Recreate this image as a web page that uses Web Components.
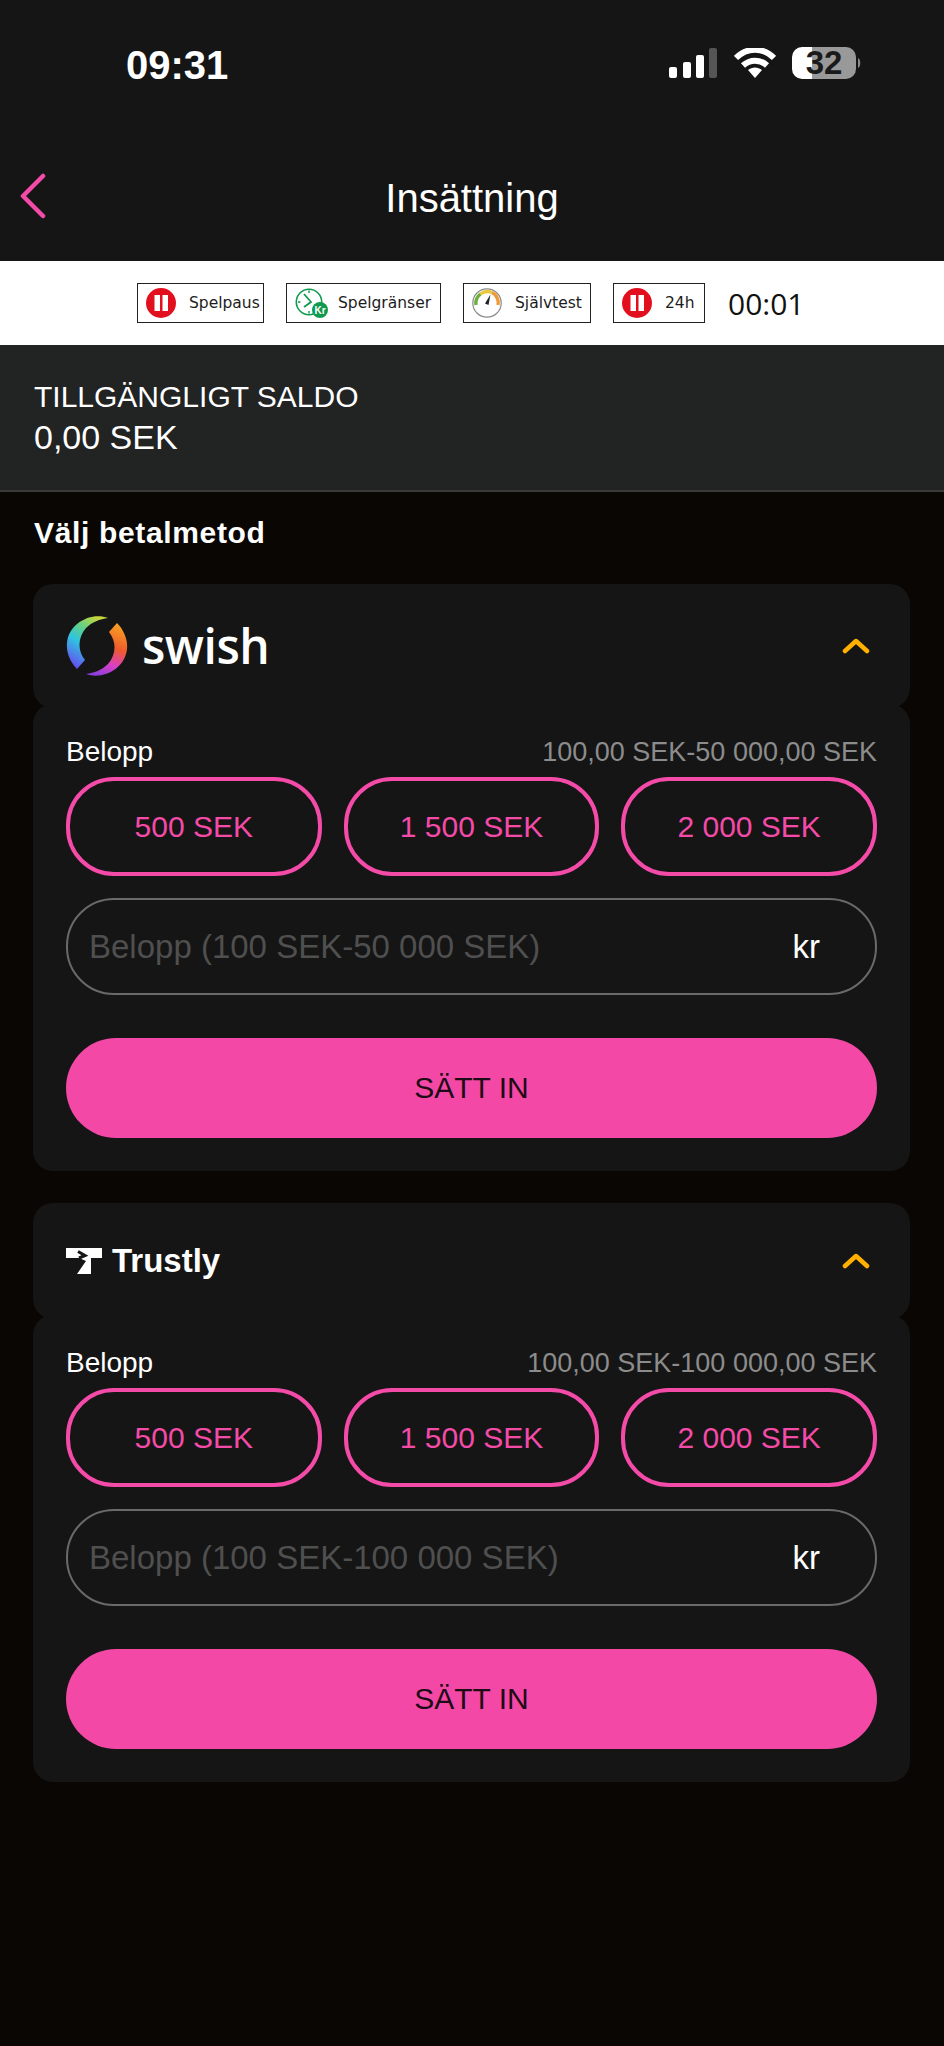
<!DOCTYPE html>
<html lang="sv">
<head>
<meta charset="utf-8">
<title>Insättning</title>
<style>
  html, body { margin: 0; padding: 0; background: #0a0603; }
  body { width: 944px; height: 2046px; overflow: hidden; font-family: "Liberation Sans", Arial, sans-serif; color: #fff; }
</style>
</head>
<body>
<app-header></app-header>
<rg-bar>
  <rg-chip type="pause" width="127">Spelpaus</rg-chip>
  <rg-chip type="clock" width="155">Spelgränser</rg-chip>
  <rg-chip type="gauge" width="128">Självtest</rg-chip>
  <rg-chip type="pause" width="92">24h</rg-chip>
</rg-bar>
<balance-panel></balance-panel>
<deposit-page>
  <pay-method range="100,00 SEK-50 000,00 SEK" placeholder="Belopp (100 SEK-50 000 SEK)" head="124">
    <swish-logo slot="logo"></swish-logo>
  </pay-method>
  <pay-method range="100,00 SEK-100 000,00 SEK" placeholder="Belopp (100 SEK-100 000 SEK)" head="116">
    <trustly-logo slot="logo"></trustly-logo>
  </pay-method>
</deposit-page>

<script>
// status bar and the title row with the back arrow
class AppHeader extends HTMLElement {
  constructor() {
    super();
    this.attachShadow({ mode: 'open' });
    this.shadowRoot.innerHTML = `
      <style>
        :host { display: block; height: 261px; background: #151515; color: #fff; }
        .status { height: 130px; box-sizing: border-box; padding: 45px 82px 0 126px; display: flex; justify-content: space-between; align-items: flex-start; }
        .time { font-size: 40px; line-height: 40px; font-weight: 700; -webkit-text-stroke: 0; }
        .icons { display: flex; align-items: flex-start; }
        .nav { height: 131px; display: flex; align-items: flex-start; position: relative; }
        .back { margin: 43px 0 0 20px; width: 26px; height: 46px; }
        h1 { position: absolute; left: 0; right: 0; top: 44px; margin: 0; text-align: center; font-size: 40px; line-height: 48px; font-weight: 400; }
        .batt { position: relative; width: 70px; height: 32px; margin-left: 16px; margin-top: 2px; }
        .batt span { position: absolute; left: 0; width: 64px; top: 0; text-align: center; font-size: 33px; line-height: 32px; font-weight: 700; color: #1a1a1a; }
      </style>
      <div class="status">
        <span class="time">09:31</span>
        <div class="icons">
          <svg width="48" height="30" viewBox="0 0 48 30" style="margin-top:3px">
            <rect x="0" y="19" width="8" height="11" rx="2" fill="#fff"/>
            <rect x="14" y="14" width="8" height="16" rx="2" fill="#fff"/>
            <rect x="27" y="7" width="8" height="23" rx="2" fill="#fff"/>
            <rect x="40" y="0" width="8" height="30" rx="2" fill="#555"/>
          </svg>
          <svg width="42" height="30" viewBox="0 0 42 30" style="margin:3px 0 0 17px">
            <path d="M2 10 C13 -1 29 -1 40 10" fill="none" stroke="#fff" stroke-width="6" stroke-linecap="butt"/>
            <path d="M9 17.5 C16 11 26 11 33 17.5" fill="none" stroke="#fff" stroke-width="6"/>
            <path d="M14 22 C18 18.5 24 18.5 28 22 L21 30Z" fill="#fff"/>
          </svg>
          <div class="batt">
            <svg width="70" height="32" viewBox="0 0 70 32" style="position:absolute;left:0;top:0">
              <defs><clipPath id="b"><rect width="64" height="32" rx="10"/></clipPath></defs>
              <g clip-path="url(#b)">
                <rect width="20" height="32" fill="#fff"/>
                <rect x="20" width="44" height="32" fill="#999"/>
              </g>
              <path d="M66 11 C69 12 69 20 66 21Z" fill="#888"/>
            </svg>
            <span>32</span>
          </div>
        </div>
      </div>
      <div class="nav">
        <svg class="back" viewBox="0 0 26 46">
          <path d="M23 3 L3 23 L23 43" transform="translate(0 0)" fill="none" stroke="#f44aa8" stroke-width="4.5" stroke-linecap="round" stroke-linejoin="round"/>
        </svg>
        <h1>Insättning</h1>
      </div>`;
  }
}

// white strip with the responsible gaming buttons and the session timer
class RgBar extends HTMLElement {
  constructor() {
    super();
    this.attachShadow({ mode: 'open' });
    this.shadowRoot.innerHTML = `
      <style>
        :host { display: flex; align-items: center; height: 84px; box-sizing: border-box; padding: 0 0 0 137px; background: #fff; gap: 22px; }
        .timer { font-family: "Open Sans", sans-serif; font-size: 30px; color: #111; margin-left: 1px; }
      </style>
      <slot></slot>
      <span class="timer">00:01</span>`;
  }
}

const chipIcons = {
  pause: `<circle cx="15" cy="15" r="15" fill="#e20f1f"/><rect x="8.5" y="7" width="5.5" height="16" fill="#fff"/><rect x="16.5" y="7" width="5.5" height="16" fill="#fff"/>`,
  clock: `<circle cx="14" cy="14" r="12.7" fill="#fff" stroke="#109a50" stroke-width="1.6"/>
    <path d="M9 6 L16 14 L9 19" fill="none" stroke="#109a50" stroke-width="1.8"/>
    <path d="M14 2.5V5M3 14H5.5M14 23V25.5" stroke="#109a50" stroke-width="1.4"/>
    <circle cx="25" cy="22" r="8" fill="#109a50"/>
    <text x="25" y="25.5" text-anchor="middle" font-family="Liberation Sans" font-weight="700" font-size="10" fill="#fff">Kr</text>`,
  gauge: `<circle cx="15" cy="15" r="14.2" fill="#fff" stroke="#8a8a8a" stroke-width="1.2"/>
    <path d="M4 17 A11.5 11.5 0 0 1 8.5 6" fill="none" stroke="#6fae3d" stroke-width="3.4"/>
    <path d="M8.5 6 A11.5 11.5 0 0 1 20 4.5" fill="none" stroke="#e8c93a" stroke-width="3.4"/>
    <path d="M20 4.5 A11.5 11.5 0 0 1 26 17" fill="none" stroke="#ef9a35" stroke-width="3.4"/>
    <path d="M18.5 6.5 L16.5 17 L13 15.5Z" fill="#222"/>`
};

class RgChip extends HTMLElement {
  constructor() {
    super();
    this.attachShadow({ mode: 'open' });
  }
  connectedCallback() {
    const icon = chipIcons[this.getAttribute('type')];
    this.shadowRoot.innerHTML = `
      <style>
        :host { display: flex; align-items: center; box-sizing: border-box; height: 40px; width: ${this.getAttribute('width')}px; border: 1px solid #222; padding-left: 8px; gap: 9px; font-family: "DejaVu Sans", sans-serif; font-size: 15.5px; color: #1c1c1c; background: #fff; }
        svg { flex: none; }
      </style>
      <svg width="34" height="30" viewBox="0 0 34 30">${icon}</svg>
      <span><slot></slot></span>`;
  }
}

class BalancePanel extends HTMLElement {
  constructor() {
    super();
    this.attachShadow({ mode: 'open' });
    this.shadowRoot.innerHTML = `
      <style>
        :host { display: block; height: 147px; box-sizing: border-box; padding: 34px 34px 0; background: #222323; border-bottom: 2px solid #3a3a37; color: #fff; }
        .label { font-size: 30px; line-height: 36px; }
        .value { font-size: 34px; line-height: 40px; margin-top: 2px; }
      </style>
      <div class="label">TILLGÄNGLIGT SALDO</div>
      <div class="value">0,00 SEK</div>`;
  }
}

class DepositPage extends HTMLElement {
  constructor() {
    super();
    this.attachShadow({ mode: 'open' });
    this.shadowRoot.innerHTML = `
      <style>
        :host { display: block; padding: 23px 34px 0 33px; }
        h2 { margin: 0 0 33px 1px; font-size: 30px; line-height: 36px; font-weight: 700; letter-spacing: 0.65px; color: #fff; }
        .list { display: flex; flex-direction: column; gap: 32px; }
      </style>
      <h2>Välj betalmetod</h2>
      <div class="list"><slot></slot></div>`;
  }
}

// one payment method: logo row, then the amount form
class PayMethod extends HTMLElement {
  constructor() {
    super();
    this.attachShadow({ mode: 'open' });
  }
  connectedCallback() {
    const pills = ['500 SEK', '1 500 SEK', '2 000 SEK'].map(p => `<div class="pill">${p}</div>`).join('');
    this.shadowRoot.innerHTML = `
      <style>
        :host { display: block; }
        .head { height: ${this.getAttribute('head')}px; box-sizing: border-box; padding: 0 40px 0 33px; background: #151515; border-radius: 20px; display: flex; align-items: center; justify-content: space-between; }
        .body { margin-top: -4px; padding: 32px 33px 33px; background: #151515; border-radius: 20px; }
        .row { display: flex; justify-content: space-between; align-items: center; height: 32px; font-size: 28px; }
        .range { color: #8c8c8c; font-size: 27px; }
        .pills { display: grid; grid-template-columns: repeat(3, 1fr); gap: 22px; margin-top: 9px; }
        .pill { height: 99px; box-sizing: border-box; border: 4px solid #f44aa8; border-radius: 48px; display: flex; align-items: center; justify-content: center; color: #f44aa8; font-size: 30px; }
        .field { height: 97px; box-sizing: border-box; margin-top: 22px; border: 2px solid #6a6a6a; border-radius: 48px; padding: 0 55px 0 21px; display: flex; align-items: center; justify-content: space-between; font-size: 33px; color: #4f4f4f; }
        .field b { font-weight: 400; color: #fff; }
        .btn { height: 100px; margin-top: 43px; border-radius: 50px; background: #f448a7; color: #1d0b16; display: flex; align-items: center; justify-content: center; font-size: 30px; }
      </style>
      <div class="head">
        <slot name="logo"></slot>
        <svg width="28" height="16" viewBox="0 0 28 16"><path d="M3 13 L14 3 L25 13" fill="none" stroke="#ffb000" stroke-width="4.5" stroke-linecap="round" stroke-linejoin="round"/></svg>
      </div>
      <div class="body">
        <div class="row"><span>Belopp</span><span class="range">${this.getAttribute('range')}</span></div>
        <div class="pills">${pills}</div>
        <div class="field"><span>${this.getAttribute('placeholder')}</span><b>kr</b></div>
        <div class="btn">SÄTT IN</div>
      </div>`;
  }
}

class SwishLogo extends HTMLElement {
  constructor() {
    super();
    this.attachShadow({ mode: 'open' });
    const blade = 'M42 3 C25 -3 3 8 1 28 C0 37 4 47 11 54 L19 45 C11 35 12 22 20 13 C26 7 34 4 42 3Z';
    this.shadowRoot.innerHTML = `
      <style>
        :host { display: flex; align-items: center; gap: 14px; }
        span { font-family: "Open Sans", sans-serif; font-weight: 600; font-size: 48px; line-height: 62px; color: #fff; letter-spacing: -0.5px; }
      </style>
      <svg width="62" height="62" viewBox="0 0 62 62">
        <defs>
          <linearGradient id="s1" x1="0.7" y1="0" x2="0.2" y2="1">
            <stop offset="0" stop-color="#c7d63a"/><stop offset="0.3" stop-color="#5fcf8a"/>
            <stop offset="0.55" stop-color="#2fc4e0"/><stop offset="1" stop-color="#6a45f2"/>
          </linearGradient>
          <linearGradient id="s2" gradientUnits="userSpaceOnUse" x1="20" y1="59" x2="40" y2="5">
            <stop offset="0" stop-color="#f9a91f"/><stop offset="0.45" stop-color="#ef5a2d"/>
            <stop offset="0.75" stop-color="#d93fc6"/><stop offset="1" stop-color="#8a3fdc"/>
          </linearGradient>
        </defs>
        <path d="${blade}" fill="url(#s1)"/>
        <path d="${blade}" fill="url(#s2)" transform="rotate(180 31 31)"/>
      </svg>
      <span>swish</span>`;
  }
}

class TrustlyLogo extends HTMLElement {
  constructor() {
    super();
    this.attachShadow({ mode: 'open' });
    this.shadowRoot.innerHTML = `
      <style>
        :host { display: flex; align-items: center; gap: 10px; }
        span { font-weight: 700; font-size: 33px; line-height: 40px; color: #fff; }
      </style>
      <svg width="36" height="26" viewBox="0 0 36 26">
        <path d="M0 0H36V10H25V26H11L20 13 L13 10H0Z" fill="#fff"/>
        <path d="M12 3.5L19 7.5L13 10" fill="none" stroke="#151515" stroke-width="3"/>
      </svg>
      <span>Trustly</span>`;
  }
}

customElements.define('app-header', AppHeader);
customElements.define('rg-bar', RgBar);
customElements.define('rg-chip', RgChip);
customElements.define('balance-panel', BalancePanel);
customElements.define('deposit-page', DepositPage);
customElements.define('pay-method', PayMethod);
customElements.define('swish-logo', SwishLogo);
customElements.define('trustly-logo', TrustlyLogo);
</script>
</body>
</html>
